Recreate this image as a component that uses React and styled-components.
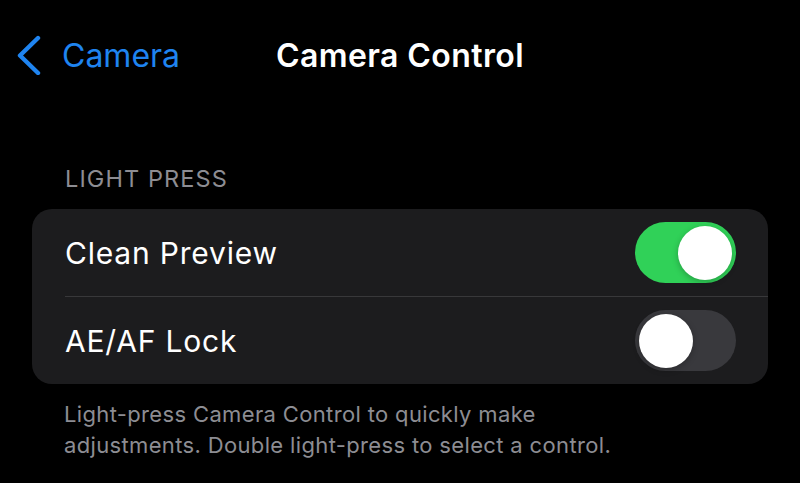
import React from "react";
import styled, { createGlobalStyle } from "styled-components";

const Global = createGlobalStyle`
  html, body { margin: 0; padding: 0; background: #000; }
  body { font-family: Inter, "Noto Sans", sans-serif; -webkit-font-smoothing: antialiased; }
`;

const Screen = styled.div`
  width: 800px;
  height: 483px;
  background: #000;
  overflow: hidden;
  display: flex;
  flex-direction: column;
`;

const NavBar = styled.div`
  display: grid;
  grid-template-columns: 1fr auto 1fr;
  align-items: center;
  height: 56px;
  margin-top: 27px;
  padding: 0 16px;
`;

const Back = styled.div`
  display: flex;
  align-items: center;
  gap: 20px;
  color: #1f84f0;
  font-size: 32px;
  letter-spacing: 0px;
`;

const Title = styled.div`
  color: #fff;
  font-size: 32px;
  font-weight: 600;
  letter-spacing: 0.4px;
`;

const Section = styled.div`
  margin-top: 82px;
  padding: 0 32px;
  display: flex;
  flex-direction: column;
`;

const Header = styled.div`
  color: #8d8d93;
  font-size: 23.5px;
  letter-spacing: 1.1px;
  padding-left: 33px;
  height: 28px;
  line-height: 28px;
  margin-bottom: 16px;
`;

const Card = styled.div`
  background: #1c1c1e;
  border-radius: 20px;
  overflow: hidden;
`;

const Row = styled.div`
  display: flex;
  align-items: center;
  justify-content: space-between;
  height: 87px;
  margin-left: 33px;
  padding-right: 32px;
  border-top: ${(p) => (p.$first ? "none" : "1px solid #38383a")};
`;

const Label = styled.div`
  color: #fff;
  font-size: 30px;
  letter-spacing: 0.8px;
  padding-top: 1px;
`;

const Track = styled.div`
  width: 101px;
  height: 61px;
  border-radius: 31px;
  background: ${(p) => (p.$on ? "#30d158" : "#39393d")};
  display: flex;
  align-items: center;
  justify-content: ${(p) => (p.$on ? "flex-end" : "flex-start")};
  padding: 0 4px;
  box-sizing: border-box;
`;

const Knob = styled.div`
  width: 54px;
  height: 54px;
  border-radius: 50%;
  background: #fff;
  box-shadow: 0 2px 6px rgba(0, 0, 0, 0.25);
`;

const Footer = styled.div`
  color: #8d8d93;
  font-size: 22px;
  letter-spacing: 0.35px;
  line-height: 31px;
  padding-left: 32px;
  margin-top: 15px;
  width: 580px;
`;

function Toggle({ on }) {
  return (
    <Track $on={on}>
      <Knob />
    </Track>
  );
}

export default function App() {
  return (
    <Screen>
      <Global />
      <NavBar>
        <Back>
          <svg width="26" height="40" viewBox="0 0 26 40">
            <path d="M22 3 L4 20.5 L22 38" fill="none" stroke="#1f84f0" strokeWidth="4.4" strokeLinecap="round" strokeLinejoin="round" />
          </svg>
          <span>Camera</span>
        </Back>
        <Title>Camera Control</Title>
        <div />
      </NavBar>
      <Section>
        <Header>LIGHT PRESS</Header>
        <Card>
          <Row $first>
            <Label>Clean Preview</Label>
            <Toggle on />
          </Row>
          <Row>
            <Label>AE/AF Lock</Label>
            <Toggle on={false} />
          </Row>
        </Card>
        <Footer>
          Light-press Camera Control to quickly make
          <br />
          adjustments. Double light-press to select a control.
        </Footer>
      </Section>
    </Screen>
  );
}
